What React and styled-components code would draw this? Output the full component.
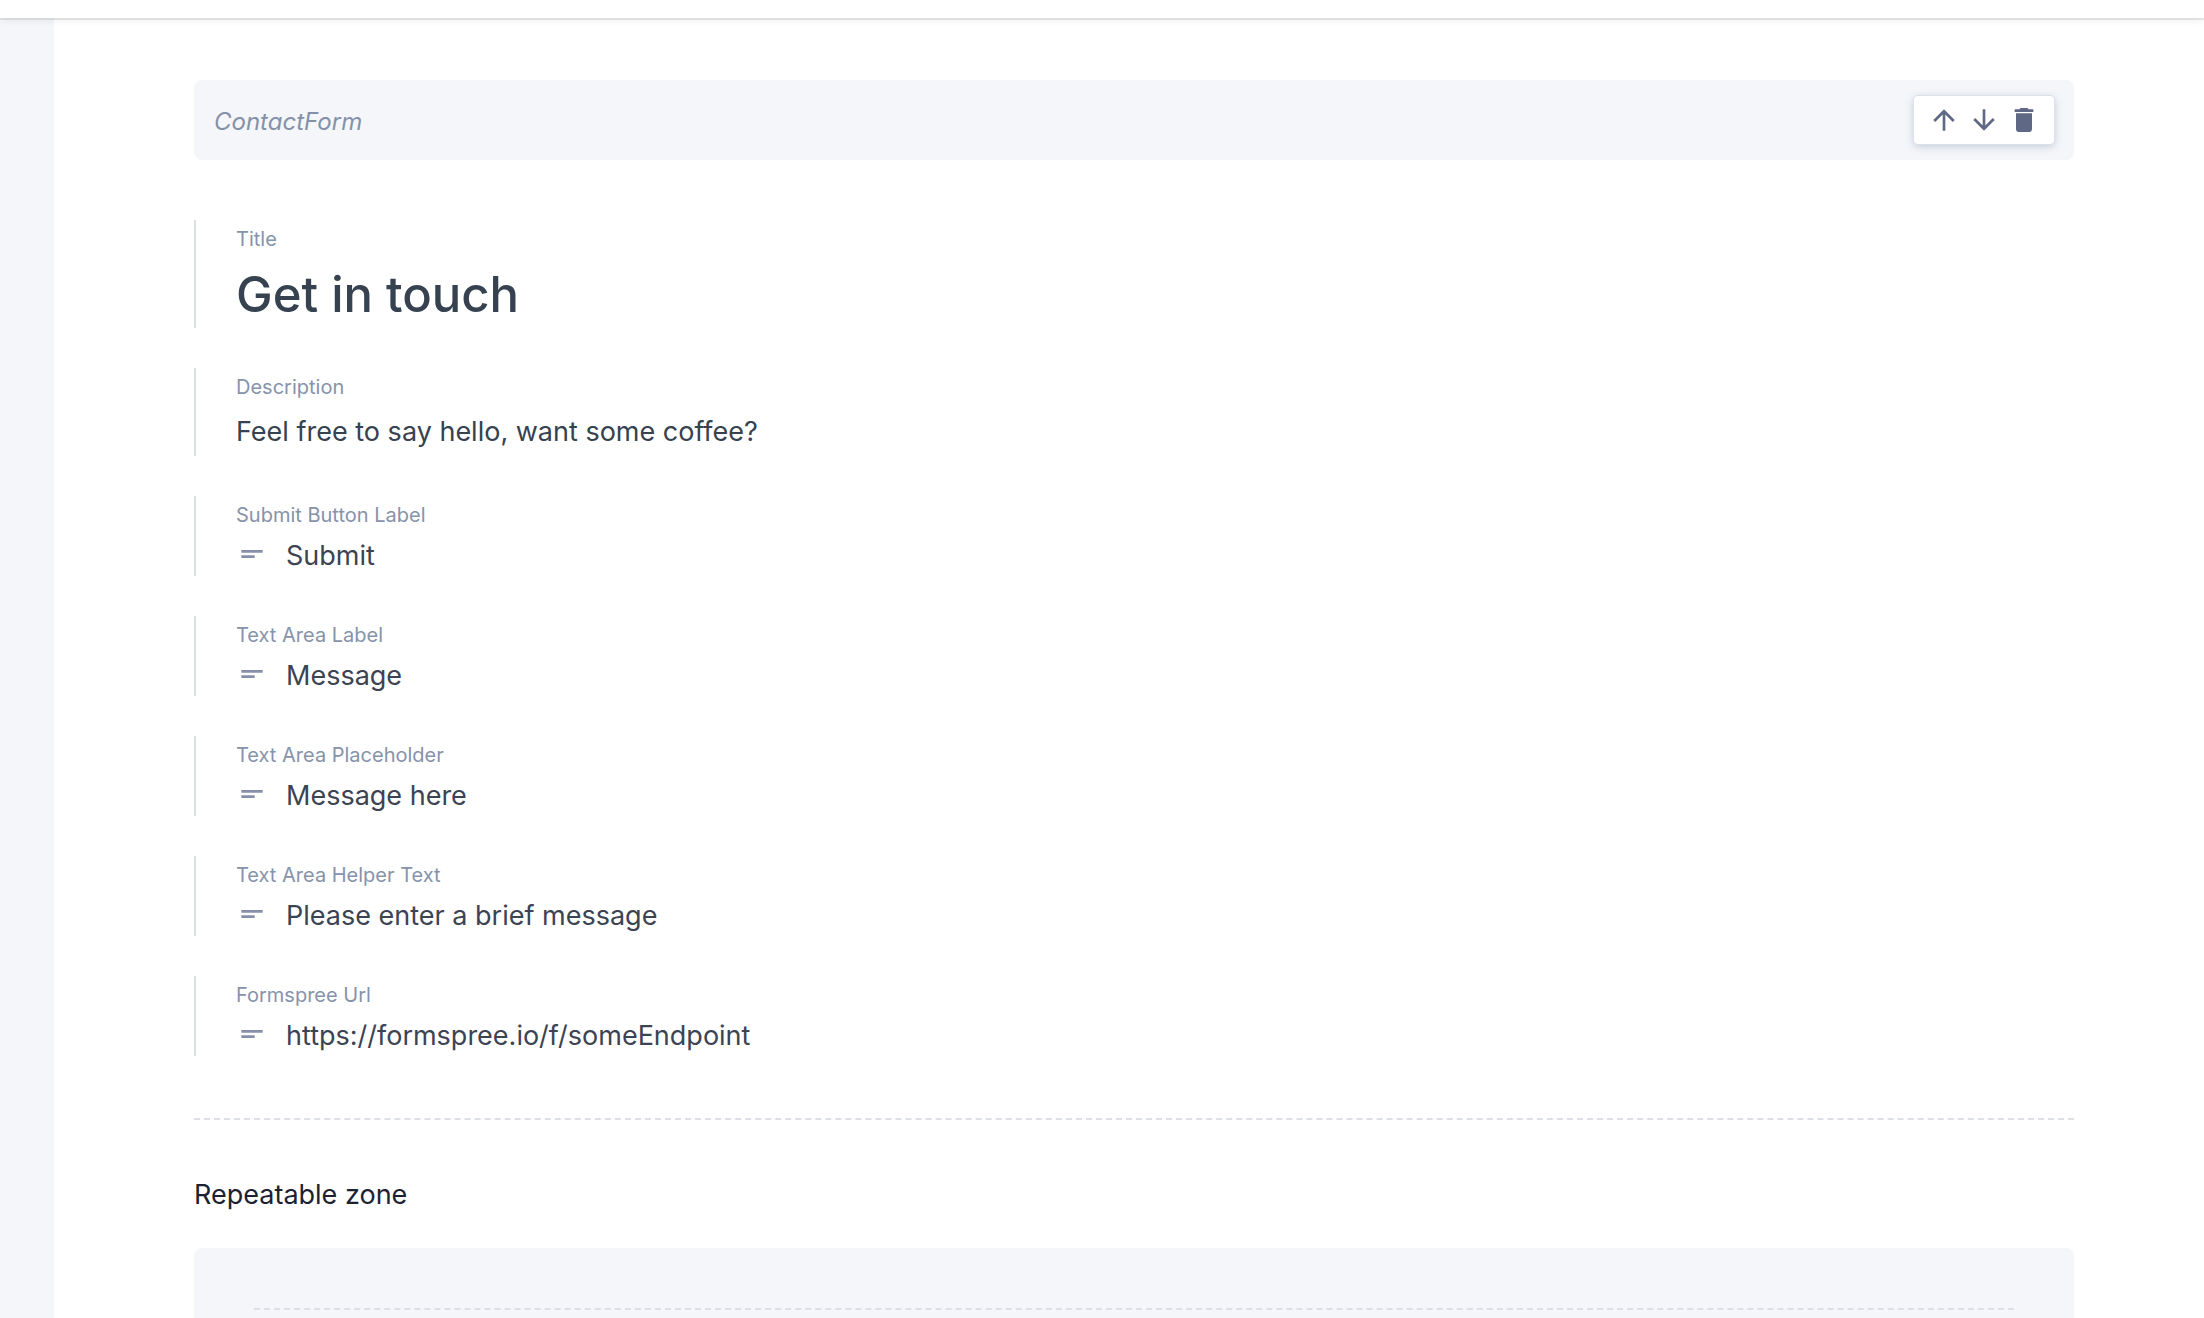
import React from "react";
import styled, { createGlobalStyle } from "styled-components";
import { MdArrowUpward, MdArrowDownward, MdDelete, MdShortText } from "react-icons/md";

const GlobalStyle = createGlobalStyle`
  * { box-sizing: border-box; }
  body {
    margin: 0;
    background: #fff;
    font-family: Inter, "Liberation Sans", sans-serif;
  }
`;

const Page = styled.div`
  display: flex;
  flex-direction: column;
  height: 100vh;
  overflow: hidden;
`;

const TopBar = styled.header`
  flex: none;
  height: 18px;
  background: #fff;
  box-shadow: 0 0 0 2px rgba(0, 0, 0, 0.08), 0 2px 8px rgba(0, 0, 0, 0.08);
  z-index: 1;
`;

const Body = styled.div`
  display: flex;
  flex: 1;
  min-height: 0;
`;

const Rail = styled.aside`
  flex: none;
  width: 54px;
  background: #f4f6fa;
`;

const Editor = styled.main`
  flex: 1;
  min-width: 0;
  padding: 62px 130px 0 140px;
`;

const SliceHeader = styled.div`
  display: flex;
  align-items: center;
  justify-content: space-between;
  height: 80px;
  padding: 0 20px;
  border-radius: 8px;
  background: #f4f6fa;
`;

const SliceName = styled.span`
  font-size: 24px;
  line-height: 32px;
  padding-top: 4px;
  font-style: italic;
  color: #8491a8;
`;

const Actions = styled.div`
  display: flex;
  gap: 8px;
  padding: 8px 14px;
  border-radius: 4px;
  background: #fff;
  box-shadow: 0 0 0 1px #dae1ea, 0 2px 8px rgba(91, 107, 135, 0.35);
`;

const IconButton = styled.button`
  display: flex;
  width: 32px;
  height: 32px;
  padding: 0;
  border: 0;
  background: none;
  color: #5f6885;
  font-size: 32px;
  cursor: pointer;
`;

const Fields = styled.form`
  display: flex;
  flex-direction: column;
  gap: 40px;
  padding: 60px 0 62px;
`;

const sizes = {
  heading: { font: 49, height: 70, pad: 0, weight: 500, color: "#36424f" },
  rich: { font: 27, height: 48, pad: 2, weight: 400, color: "#36424f" },
  text: { font: 27, height: 40, pad: 2, weight: 400, color: "#3c4353" },
};

const Field = styled.div`
  padding: 0 0 ${(p) => sizes[p.$kind].pad}px 40px;
  border-left: 2px solid #dce0e6;
`;

const Label = styled.label`
  display: block;
  font-size: 20px;
  line-height: 38px;
  color: #8693aa;
`;

const Control = styled.div`
  display: flex;
  align-items: center;
  gap: 18px;
  color: #8491a8;
  font-size: 32px;
`;

const TextInput = styled.input`
  flex: 1;
  min-width: 0;
  height: ${(p) => sizes[p.$kind].height}px;
  padding: 2px 0 0;
  border: 0;
  outline: 0;
  background: none;
  font-family: inherit;
  font-size: ${(p) => sizes[p.$kind].font}px;
  font-weight: ${(p) => sizes[p.$kind].weight};
  color: ${(p) => sizes[p.$kind].color};
`;

const Divider = styled.hr`
  margin: 0;
  border: 0;
  border-top: 2px dashed #dcdfe5;
`;

const ZoneTitle = styled.h2`
  margin: 0;
  padding: 55px 0 33px;
  font-size: 27px;
  font-weight: 400;
  line-height: 40px;
  color: #1d2230;
`;

const Zone = styled.section`
  height: 240px;
  padding: 60px;
  border-radius: 8px;
  background: #f4f6fa;
`;

const fields = [
  { id: "title", label: "Title", value: "Get in touch", kind: "heading" },
  { id: "description", label: "Description", value: "Feel free to say hello, want some coffee?", kind: "rich" },
  { id: "submit", label: "Submit Button Label", value: "Submit", kind: "text" },
  { id: "area-label", label: "Text Area Label", value: "Message", kind: "text" },
  { id: "area-placeholder", label: "Text Area Placeholder", value: "Message here", kind: "text" },
  { id: "area-helper", label: "Text Area Helper Text", value: "Please enter a brief message", kind: "text" },
  { id: "url", label: "Formspree Url", value: "https://formspree.io/f/someEndpoint", kind: "text" },
];

export default function App() {
  return (
    <Page>
      <GlobalStyle />
      <TopBar />
      <Body>
        <Rail />
        <Editor>
          <SliceHeader>
            <SliceName>ContactForm</SliceName>
            <Actions>
              <IconButton type="button" aria-label="Move up"><MdArrowUpward /></IconButton>
              <IconButton type="button" aria-label="Move down"><MdArrowDownward /></IconButton>
              <IconButton type="button" aria-label="Delete"><MdDelete /></IconButton>
            </Actions>
          </SliceHeader>
          <Fields>
            {fields.map((f) => (
              <Field key={f.id} $kind={f.kind}>
                <Label htmlFor={f.id}>{f.label}</Label>
                <Control>
                  {f.kind === "text" && <MdShortText />}
                  <TextInput id={f.id} type="text" $kind={f.kind} defaultValue={f.value} />
                </Control>
              </Field>
            ))}
          </Fields>
          <Divider />
          <ZoneTitle>Repeatable zone</ZoneTitle>
          <Zone>
            <Divider />
          </Zone>
        </Editor>
      </Body>
    </Page>
  );
}
